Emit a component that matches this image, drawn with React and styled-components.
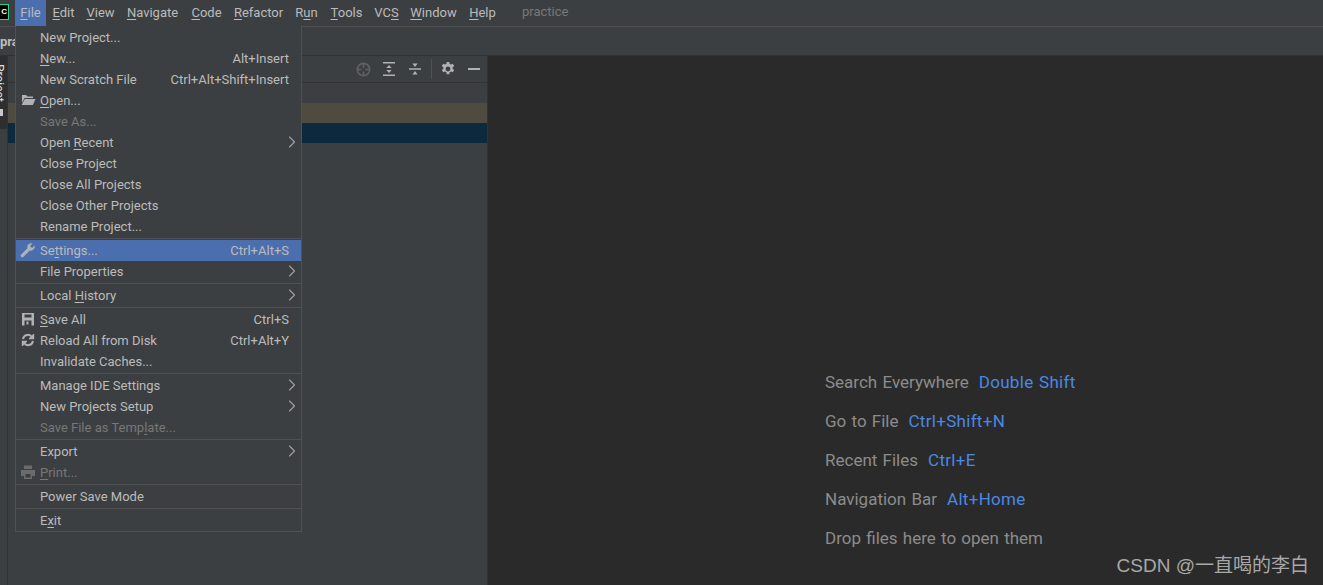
import React from 'react';
import styled, { createGlobalStyle } from 'styled-components';
import { ChevronRight } from 'lucide-react';

const GlobalStyle = createGlobalStyle`
  html, body {
    margin: 0;
    padding: 0;
    background: #3c3f41;
  }
  u {
    text-underline-offset: 2px;
  }
`;

const Window = styled.div`
  position: relative;
  width: 1323px;
  height: 585px;
  overflow: hidden;
  display: flex;
  flex-direction: column;
  background: #3c3f41;
  color: #bbbbbb;
  font-family: Roboto, "Liberation Sans", sans-serif;
  font-size: 13px;
`;

const MenuBar = styled.div`
  height: 26px;
  flex: none;
  display: flex;
  align-items: stretch;
  border-bottom: 1px solid #515151;
`;

const Logo = styled.div`
  width: 9px;
  height: 16px;
  margin: 4px 6px 0 0;
  box-sizing: border-box;
  background: #000;
  border: solid #21d789;
  border-width: 1px 1px 1px 0;
  color: #fff;
  font: bold 8px/13px "Liberation Sans", sans-serif;
  text-align: right;
  padding-right: 1px;
`;

const MenuItem = styled.div`
  width: ${(p) => p.$width}px;
  text-align: center;
  line-height: 26px;
  background: ${(p) => (p.$active ? '#4b6eaf' : 'transparent')};
`;

const ProjectName = styled.div`
  margin-left: 20px;
  line-height: 24px;
  color: #787878;
`;

const NavBar = styled.div`
  height: 28px;
  flex: none;
  border-bottom: 1px solid #323232;
  display: flex;
  align-items: center;
`;

const Crumb = styled.span`
  font-weight: bold;
  color: #bbbbbb;
`;

const Workspace = styled.div`
  flex: 1;
  display: flex;
  min-height: 0;
`;

const Stripe = styled.div`
  width: 7px;
  flex: none;
  border-right: 1px solid #323232;
`;

const StripeTab = styled.div`
  width: 7px;
  height: 73px;
  background: #2d2f30;
  overflow: hidden;
  display: flex;
  flex-direction: column;
  align-items: flex-end;
`;

const StripeLabel = styled.span`
  writing-mode: vertical-rl;
  color: #e0e0e0;
  font-size: 12px;
  line-height: 14px;
  margin: 8px 1px 0 0;
  flex: none;
`;

const StripeMark = styled.div`
  align-self: flex-start;
  width: 3px;
  height: 7px;
  margin-top: 7px;
  flex: none;
  background: #c8c8c8;
`;

const ProjectPanel = styled.div`
  width: 479px;
  flex: none;
  display: flex;
  flex-direction: column;
  border-right: 1px solid #323232;
`;

const PanelHeader = styled.div`
  height: 26px;
  flex: none;
  border-bottom: 1px solid #323232;
  display: flex;
  align-items: center;
  justify-content: flex-end;
`;

const HeaderButton = styled.div`
  width: 26px;
  display: flex;
  justify-content: center;
`;

const HeaderDivider = styled.div`
  width: 1px;
  height: 20px;
  margin: 0 3px;
  background: #515151;
`;

const TreeBody = styled.div`
  padding-top: 20px;
`;

const TreeRow = styled.div`
  height: 20px;
  background: ${(p) => p.$bg};
`;

const Editor = styled.div`
  flex: 1;
  background: #2a2a2a;
  padding: 314px 0 0 337px;
`;

const Hint = styled.div`
  height: 39px;
  line-height: 24px;
  font-size: 17px;
  word-spacing: 1px;
  color: #8c8c8c;
  white-space: nowrap;
`;

const Shortcut = styled.span`
  color: #4a88e4;
  margin-left: 10px;
  letter-spacing: 0.3px;
`;

const Watermark = styled.div`
  position: absolute;
  right: 14px;
  bottom: 7px;
  font-family: "Liberation Sans", "Noto Sans CJK SC", sans-serif;
  font-size: 19px;
  line-height: 24px;
  color: #a8a8a8;
`;

const FileMenu = styled.div`
  position: absolute;
  left: 15px;
  top: 26px;
  width: 287px;
  box-sizing: border-box;
  background: #3c3f41;
  border: 1px solid #515151;
  border-top: 0;
  padding-top: 1px;
`;

const Row = styled.div`
  position: relative;
  height: 21px;
  display: flex;
  align-items: center;
  padding: 0 12px 0 24px;
  white-space: nowrap;
  color: ${(p) => (p.$disabled ? '#777777' : '#bbbbbb')};
  background: ${(p) => (p.$selected ? '#4b6eaf' : 'transparent')};
`;

const RowIcon = styled.span`
  position: absolute;
  left: 4px;
  top: 2px;
  width: 16px;
  height: 16px;
  display: flex;
  color: ${(p) => (p.$disabled ? '#6b6b6b' : '#afb1b3')};
`;

const RowLabel = styled.span`
  flex: 1;
`;

const Arrow = styled(ChevronRight)`
  margin: -2px -13px 0 0;
  color: #a0a0a0;
`;

const Separator = styled.div`
  height: 1px;
  margin: 1px 0;
  background: #515151;
`;

const FolderIcon = () => (
  <svg width="16" height="16" viewBox="0 0 16 16" fill="currentColor">
    <path d="M2 3h4l1.5 1.5H13V6H4.5L2 11z" />
    <path d="M4.8 7H15.5l-2.6 6H1.6z" />
  </svg>
);

const WrenchIcon = () => (
  <svg width="16" height="16" viewBox="0 0 16 16" fill="currentColor">
    <path d="M14.6 3.4 12 6l-2-2 2.6-2.6A4 4 0 0 0 7.4 6.2L1.2 12.4a1.6 1.6 0 0 0 2.3 2.3l6.3-6.2a4 4 0 0 0 4.8-5.1z" />
  </svg>
);

const SaveIcon = () => (
  <svg width="16" height="16" viewBox="0 0 16 16" fill="currentColor">
    <path fillRule="evenodd" d="M2 2h12v12.5H2zM4.5 3.5v3h7v-3zM4.5 9.5v5h7v-5z" />
    <path d="M6.5 10.5h2v3h-2z" />
  </svg>
);

const ReloadIcon = () => (
  <svg width="16" height="16" viewBox="0 0 16 16" fill="none" stroke="currentColor" strokeWidth="2">
    <path d="M3 7a5 5 0 0 1 9-2" />
    <path d="M13 9a5 5 0 0 1-9 2" />
    <path d="M13.5 2v4.5H9M2.5 14V9.5H7" strokeWidth="1.4" fill="currentColor" />
  </svg>
);

const PrintIcon = () => (
  <svg width="16" height="16" viewBox="0 0 16 16" fill="currentColor">
    <path fillRule="evenodd" d="M4 1.5h8V5H4zM1 6h14v6h-3v3H4v-3H1zM5.5 10v3.5h5V10z" />
  </svg>
);

const LocateIcon = () => (
  <svg width="15" height="15" viewBox="0 0 16 16" fill="none" stroke="#5f6061" strokeWidth="1.8">
    <circle cx="8" cy="8" r="6.6" />
    <path d="M8 1.5v4.5M8 10v4.5M1.5 8H6M10 8h4.5" />
  </svg>
);

const ExpandIcon = () => (
  <svg width="14" height="14" viewBox="0 0 14 14" fill="#afb1b3">
    <path d="M1 0h12v1.6H1zM1 12.4h12V14H1zM7 3l2.6 3H4.4zM7 11 4.4 8h5.2z" />
  </svg>
);

const CollapseIcon = () => (
  <svg width="14" height="14" viewBox="0 0 14 14" fill="#afb1b3">
    <path d="M1 6.2h12v1.6H1zM7 5 4.4 1.5h5.2zM7 9l2.6 3.5H4.4z" />
  </svg>
);

const GearIcon = () => (
  <svg width="14" height="14" viewBox="0 0 14 14" fill="#afb1b3">
    <path fillRule="evenodd" d="M5.7 0h2.6l.4 2 1.2.6 1.9-.8 1.3 2.3-1.5 1.3v1.3l1.5 1.3-1.3 2.3-1.9-.7-1.2.7-.4 2H5.7l-.4-2-1.2-.7-1.9.7L.9 8l1.5-1.3V5.4L.9 4.1l1.3-2.3 1.9.8 1.2-.6zM7 4.6a2.4 2.4 0 1 0 0 4.8 2.4 2.4 0 0 0 0-4.8z" />
  </svg>
);

const MinusIcon = () => (
  <svg width="12" height="14" viewBox="0 0 12 14" fill="#afb1b3">
    <path d="M0 6h12v2H0z" />
  </svg>
);

const menuBarItems = [
  { width: 31, parts: ['', 'F', 'ile'] },
  { width: 35, parts: ['', 'E', 'dit'] },
  { width: 39, parts: ['', 'V', 'iew'] },
  { width: 65, parts: ['', 'N', 'avigate'] },
  { width: 43, parts: ['', 'C', 'ode'] },
  { width: 61, parts: ['', 'R', 'efactor'] },
  { width: 35, parts: ['R', 'u', 'n'] },
  { width: 45, parts: ['', 'T', 'ools'] },
  { width: 35, parts: ['VC', 'S', ''] },
  { width: 59, parts: ['', 'W', 'indow'] },
  { width: 39, parts: ['', 'H', 'elp'] },
];

const fileMenu = [
  [
    { label: ['New Project...'] },
    { label: ['', 'N', 'ew...'], keys: 'Alt+Insert' },
    { label: ['New Scratch File'], keys: 'Ctrl+Alt+Shift+Insert' },
    { label: ['', 'O', 'pen...'], icon: <FolderIcon /> },
    { label: ['Save As...'], disabled: true },
    { label: ['Open ', 'R', 'ecent'], sub: true },
    { label: ['Close Project'] },
    { label: ['Close All Projects'] },
    { label: ['Close Other Projects'] },
    { label: ['Rename Project...'] },
  ],
  [
    { label: ['Se', 't', 'tings...'], keys: 'Ctrl+Alt+S', icon: <WrenchIcon />, selected: true },
    { label: ['File Properties'], sub: true },
  ],
  [{ label: ['Local ', 'H', 'istory'], sub: true }],
  [
    { label: ['', 'S', 'ave All'], keys: 'Ctrl+S', icon: <SaveIcon /> },
    { label: ['Reload All from Disk'], keys: 'Ctrl+Alt+Y', icon: <ReloadIcon /> },
    { label: ['Invalidate Caches...'] },
  ],
  [
    { label: ['Manage IDE Settings'], sub: true },
    { label: ['New Projects Setup'], sub: true },
    { label: ['Save File as Temp', 'l', 'ate...'], disabled: true },
  ],
  [
    { label: ['Export'], sub: true },
    { label: ['', 'P', 'rint...'], disabled: true, icon: <PrintIcon /> },
  ],
  [{ label: ['Power Save Mode'] }],
  [{ label: ['E', 'x', 'it'] }],
];

const hints = [
  ['Search Everywhere', 'Double Shift'],
  ['Go to File', 'Ctrl+Shift+N'],
  ['Recent Files', 'Ctrl+E'],
  ['Navigation Bar', 'Alt+Home'],
  ['Drop files here to open them'],
];

const Mnemonic = ({ parts }) => (
  <>
    {parts[0]}
    {parts[1] && <u>{parts[1]}</u>}
    {parts[2]}
  </>
);

export default function App() {
  return (
    <Window>
      <GlobalStyle />
      <MenuBar>
        <Logo>C</Logo>
        {menuBarItems.map((item, i) => (
          <MenuItem key={i} $width={item.width} $active={i === 0}>
            <Mnemonic parts={item.parts} />
          </MenuItem>
        ))}
        <ProjectName>practice</ProjectName>
      </MenuBar>
      <NavBar>
        <Crumb>pra</Crumb>
      </NavBar>
      <Workspace>
        <Stripe>
          <StripeTab>
            <StripeLabel>Project</StripeLabel>
            <StripeMark />
          </StripeTab>
        </Stripe>
        <ProjectPanel>
          <PanelHeader>
            <HeaderButton><LocateIcon /></HeaderButton>
            <HeaderButton><ExpandIcon /></HeaderButton>
            <HeaderButton><CollapseIcon /></HeaderButton>
            <HeaderDivider />
            <HeaderButton><GearIcon /></HeaderButton>
            <HeaderButton><MinusIcon /></HeaderButton>
          </PanelHeader>
          <TreeBody>
            <TreeRow $bg="#4f4b41" />
            <TreeRow $bg="#0d293e" />
          </TreeBody>
        </ProjectPanel>
        <Editor>
          {hints.map(([text, keys]) => (
            <Hint key={text}>
              {text}
              {keys && <Shortcut>{keys}</Shortcut>}
            </Hint>
          ))}
        </Editor>
      </Workspace>
      <Watermark>CSDN @一直喝的李白</Watermark>
      <FileMenu>
        {fileMenu.map((group, g) => (
          <React.Fragment key={g}>
            {g > 0 && <Separator />}
            {group.map((item) => (
              <Row key={item.label.join('')} $disabled={item.disabled} $selected={item.selected}>
                {item.icon && <RowIcon $disabled={item.disabled}>{item.icon}</RowIcon>}
                <RowLabel>
                  <Mnemonic parts={item.label} />
                </RowLabel>
                {item.keys}
                {item.sub && <Arrow size={20} strokeWidth={1.3} />}
              </Row>
            ))}
          </React.Fragment>
        ))}
      </FileMenu>
    </Window>
  );
}
